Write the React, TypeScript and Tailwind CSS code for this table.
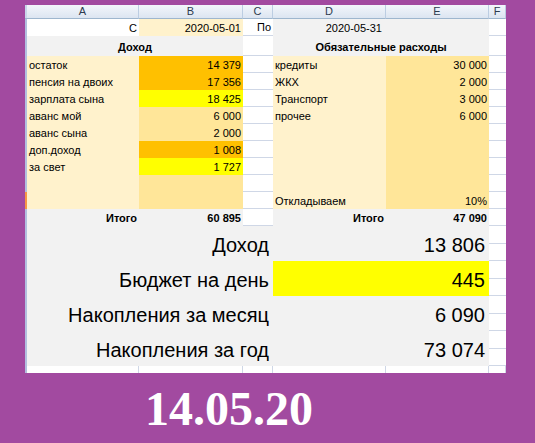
import React from 'react';

type Tone = 'white' | 'cream' | 'sand' | 'orange' | 'yellow' | 'gray';

// Excel-like fills; white cells keep the light gridline at their bottom edge.
const TONE: Record<Tone, string> = {
  white: 'bg-white border-b border-[#cfd7e6]',
  cream: 'bg-[#fff2cc]',
  sand: 'bg-[#ffe699]',
  orange: 'bg-[#ffc000]',
  yellow: 'bg-[#ffff00]',
  gray: 'bg-[#f2f2f2]',
};

const INCOME: { label: string; value: string; tone: Tone }[] = [
  { label: 'остаток', value: '14 379', tone: 'orange' },
  { label: 'пенсия на двоих', value: '17 356', tone: 'orange' },
  { label: 'зарплата сына', value: '18 425', tone: 'yellow' },
  { label: 'аванс мой', value: '6 000', tone: 'sand' },
  { label: 'аванс сына', value: '2 000', tone: 'sand' },
  { label: 'доп.доход', value: '1 008', tone: 'orange' },
  { label: 'за свет', value: '1 727', tone: 'yellow' },
  { label: '', value: '', tone: 'sand' },
  { label: '', value: '', tone: 'sand' },
];

const EXPENSES = [
  ['кредиты', '30 000'],
  ['ЖКХ', '2 000'],
  ['Транспорт', '3 000'],
  ['прочее', '6 000'],
  ['', ''],
  ['', ''],
  ['', ''],
  ['', ''],
  ['Откладываем', '10%'],
] as const;

const SUMMARY: { label: string; value: string; tone: Tone }[] = [
  { label: 'Доход', value: '13 806', tone: 'gray' },
  { label: 'Бюджет на день', value: '445', tone: 'yellow' },
  { label: 'Накопления за месяц', value: '6 090', tone: 'gray' },
  { label: 'Накопления за год', value: '73 074', tone: 'gray' },
];

const Cell = ({
  className = '',
  children,
}: {
  className?: string;
  children?: React.ReactNode;
}) => (
  <div
    className={`flex items-end overflow-hidden whitespace-nowrap pb-[1px] text-[11px] leading-[13px] text-black ${className}`}
  >
    {children}
  </div>
);

const Strip = ({ mark = false }: { mark?: boolean }) => (
  <div className={mark ? 'bg-[#f79646]' : 'bg-[#b3bfdf]'} />
);

const HEAD = 'flex items-center justify-center border-r border-b border-r-[#bccde2] border-b-[#9eb6ce] bg-gradient-to-b from-[#f3f6fb] to-[#dce5f1] text-[11px] text-[#2d3b4e]';

export default function App() {
  return (
    <div className="flex h-[443px] w-[535px] flex-col bg-[#a24aa0] pt-[5px] font-['Liberation_Sans',Arial,sans-serif]">
      <div className="ml-[25px] grid w-[481px] grid-cols-[2px_112px_104px_30px_113px_103px_17px] grid-rows-[14px_17px_20px_repeat(10,17px)_repeat(4,35px)_7px] bg-white">
        {/* column letters */}
        <div className="border-b border-[#9eb6ce] bg-[#c9d6ea]" />
        {['A', 'B', 'C', 'D', 'E', 'F'].map((letter) => (
          <div key={letter} className={HEAD}>
            {letter}
          </div>
        ))}

        {/* period row */}
        <Strip />
        <Cell className="justify-end bg-white pr-[2px]">С</Cell>
        <Cell className={`justify-end pr-[2px] ${TONE.cream}`}>2020-05-01</Cell>
        <Cell className={`justify-end pr-[2px] ${TONE.white}`}>По</Cell>
        <Cell className={`justify-end pr-[4px] ${TONE.gray}`}>2020-05-31</Cell>
        <Cell className={TONE.gray} />
        <Cell className={TONE.white} />

        {/* section titles */}
        <Strip />
        <Cell className={`col-span-2 justify-center pb-[2px] font-bold ${TONE.gray}`}>Доход</Cell>
        <Cell className={TONE.white} />
        <Cell className={`col-span-2 justify-center pb-[2px] font-bold ${TONE.gray}`}>
          Обязательные расходы
        </Cell>
        <Cell className={TONE.white} />

        {INCOME.map((row, i) => (
          <React.Fragment key={i}>
            <Strip mark={i === INCOME.length - 1} />
            <Cell className={`pl-[2px] ${TONE.cream}`}>{row.label}</Cell>
            <Cell className={`justify-end pr-[2px] ${TONE[row.tone]}`}>{row.value}</Cell>
            <Cell className={TONE.white} />
            <Cell className={`pl-[2px] ${TONE.cream}`}>{EXPENSES[i][0]}</Cell>
            <Cell className={`justify-end pr-[2px] ${TONE.sand}`}>{EXPENSES[i][1]}</Cell>
            <Cell className={TONE.white} />
          </React.Fragment>
        ))}

        {/* totals */}
        <Strip />
        <Cell className={`justify-end pr-[2px] font-bold ${TONE.gray}`}>Итого</Cell>
        <Cell className={`justify-end pr-[2px] font-bold ${TONE.gray}`}>60 895</Cell>
        <Cell className={TONE.white} />
        <Cell className={`justify-end pr-[2px] font-bold ${TONE.gray}`}>Итого</Cell>
        <Cell className={`justify-end pr-[2px] font-bold ${TONE.gray}`}>47 090</Cell>
        <Cell className={TONE.white} />

        {SUMMARY.map((row) => (
          <React.Fragment key={row.label}>
            <Strip />
            <div className="col-span-3 flex items-end justify-end bg-[#f2f2f2] pb-[3px] pr-[4px] text-[20px] leading-[26px] text-black">
              {row.label}
            </div>
            <div
              className={`col-span-2 flex items-end justify-end pb-[3px] pr-[4px] text-[20px] leading-[26px] text-black ${TONE[row.tone]}`}
            >
              {row.value}
            </div>
            <div className="flex flex-col bg-white">
              <div className="flex-1 border-b border-[#cfd7e6]" />
              <div className="flex-1 border-b border-[#cfd7e6]" />
            </div>
          </React.Fragment>
        ))}

        {/* next, cut-off sheet row */}
        <Strip />
        {[0, 1, 2, 3, 4, 5].map((c) => (
          <div key={c} className="border-r border-[#cfd7e6] bg-white" />
        ))}
      </div>

      <div className="ml-[145px] mt-[12px] font-['Liberation_Serif','Times_New_Roman',serif] text-[48px] font-bold leading-none text-white">
        14.05.20
      </div>
    </div>
  );
}
